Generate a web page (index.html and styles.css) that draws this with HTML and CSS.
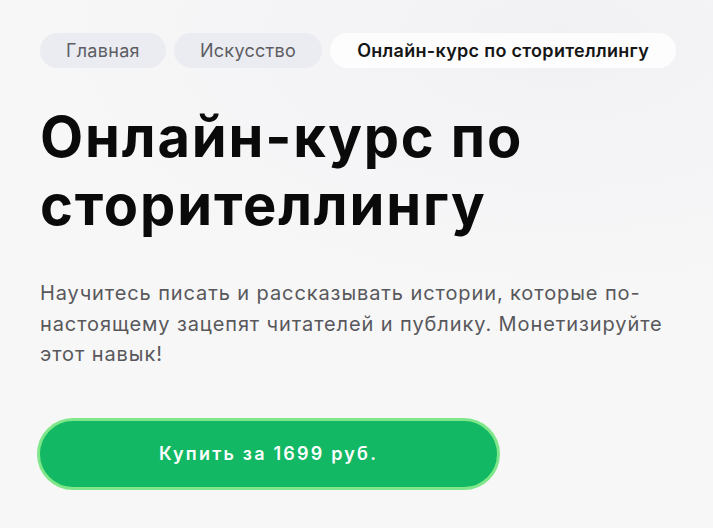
FILE: index.html
```html
<!DOCTYPE html>
<html lang="ru">
<head>
<meta charset="utf-8">
<link rel="stylesheet" href="styles.css">
</head>
<body>
<main class="hero">
  <nav class="crumbs">
    <a class="crumb" href="#">Главная</a>
    <a class="crumb" href="#">Искусство</a>
    <span class="crumb crumb-active">Онлайн-курс по сторителлингу</span>
  </nav>
  <h1 class="title">Онлайн-курс по<br>сторителлингу</h1>
  <p class="lead">Научитесь писать и рассказывать истории, которые по-настоящему зацепят читателей и публику. Монетизируйте этот навык!</p>
  <button class="buy" type="button">Купить за 1699 руб.</button>
</main>
</body>
</html>
```
FILE: styles.css
```css
html, body {
  margin: 0;
  padding: 0;
}
body {
  width: 713px;
  height: 528px;
  overflow: hidden;
  background: radial-gradient(ellipse 520px 260px at 560px 40px, #f1f1f4 0%, #f5f5f7 60%, #f7f7f7 100%), #f7f7f7;
  font-family: Inter, "Noto Sans", sans-serif;
}
.hero {
  padding: 33px 0 0 40px;
  display: flex;
  flex-direction: column;
  align-items: flex-start;
}
.crumbs {
  display: flex;
  gap: 8px;
}
.crumb {
  height: 35px;
  padding: 0 26px;
  border-radius: 18px;
  background: #ebecf1;
  color: #5d5d63;
  font-size: 18px;
  letter-spacing: 0.3px;
  line-height: 35px;
  text-decoration: none;
  white-space: nowrap;
}
.crumb-active {
  padding: 0 27px;
  background: #fdfdfd;
  color: #151515;
  font-weight: 600;
}
.title {
  margin: 35px 0 0;
  font-size: 56px;
  line-height: 68px;
  font-weight: 700;
  color: #0a0a0a;
  letter-spacing: 1.85px;
}
.lead {
  margin: 39px 0 0;
  width: 640px;
  font-size: 20px;
  line-height: 30.5px;
  letter-spacing: 0.9px;
  color: #58585c;
}
.buy {
  margin: 48px 0 0 -3px;
  width: 463px;
  height: 72px;
  border: 3px solid #80e68a;
  border-radius: 36px;
  background: #12b864;
  color: #ffffff;
  font-family: Inter, "Noto Sans", sans-serif;
  font-size: 18px;
  font-weight: 600;
  letter-spacing: 2.2px;
  cursor: pointer;
}
```
